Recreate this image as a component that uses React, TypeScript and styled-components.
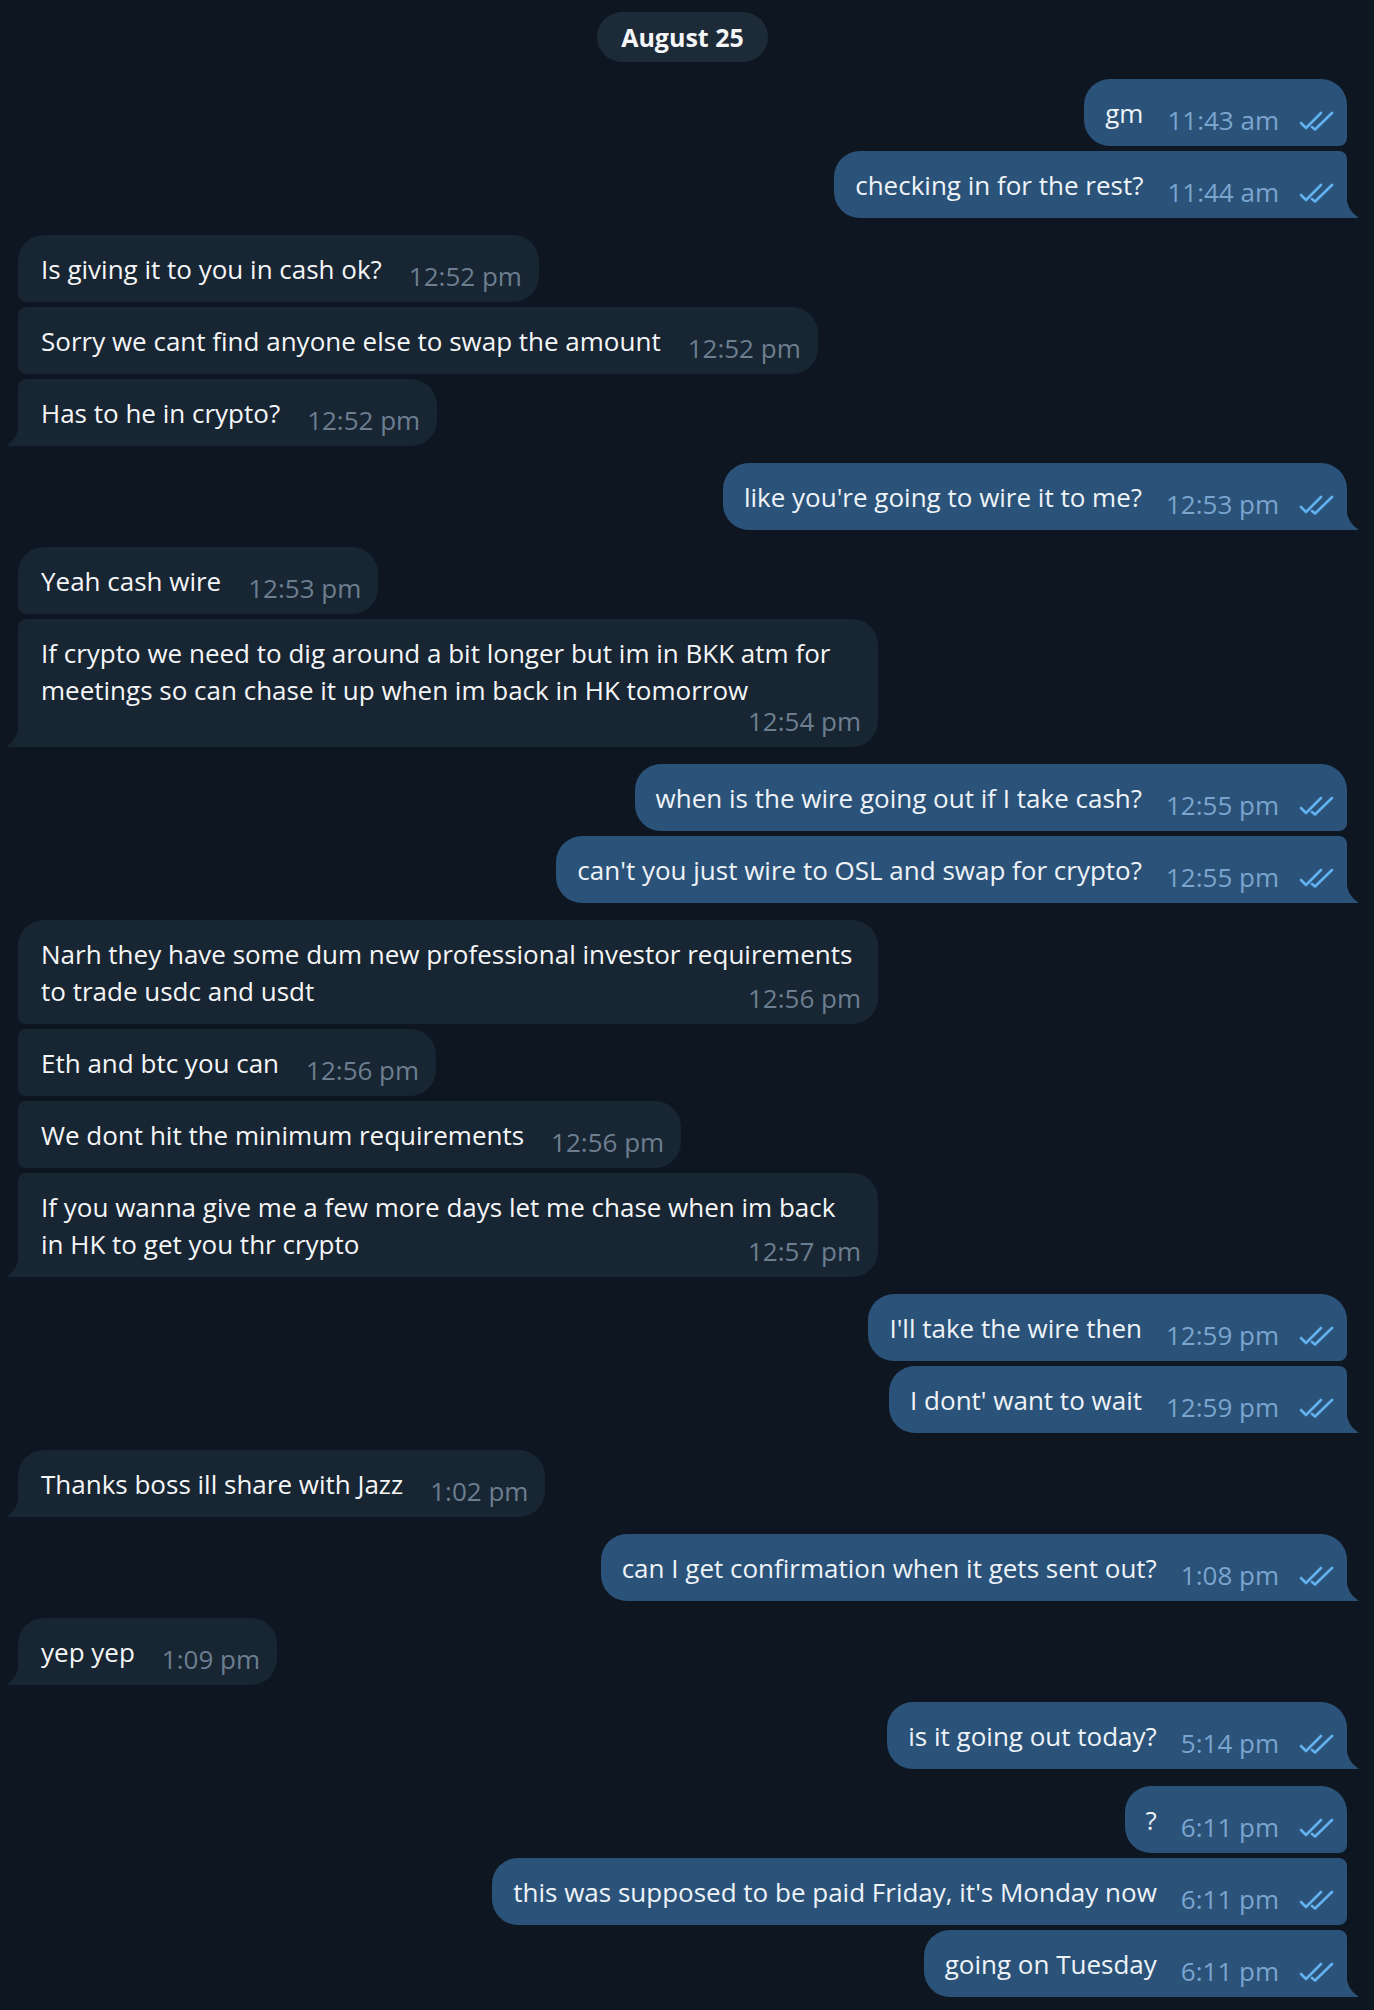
import React from "react";
import styled, { createGlobalStyle, css } from "styled-components";

const GlobalStyle = createGlobalStyle`
  html, body {
    margin: 0;
    padding: 0;
    background: #0e1621;
  }
  body {
    font-family: "Open Sans", "Noto Sans", "Liberation Sans", sans-serif;
    -webkit-font-smoothing: antialiased;
  }
`;

type Msg = { text: string; time: string; below?: boolean };
type Group = { out: boolean; items: Msg[] };

const groups: Group[] = [
  {
    out: true,
    items: [
      { text: "gm", time: "11:43 am" },
      { text: "checking in for the rest?", time: "11:44 am" },
    ],
  },
  {
    out: false,
    items: [
      { text: "Is giving it to you in cash ok?", time: "12:52 pm" },
      { text: "Sorry we cant find anyone else to swap the amount", time: "12:52 pm" },
      { text: "Has to he in crypto?", time: "12:52 pm" },
    ],
  },
  { out: true, items: [{ text: "like you're going to wire it to me?", time: "12:53 pm" }] },
  {
    out: false,
    items: [
      { text: "Yeah cash wire", time: "12:53 pm" },
      {
        text: "If crypto we need to dig around a bit longer but im in BKK atm for meetings so can chase it up when im back in HK tomorrow",
        time: "12:54 pm",
        below: true,
      },
    ],
  },
  {
    out: true,
    items: [
      { text: "when is the wire going out if I take cash?", time: "12:55 pm" },
      { text: "can't you just wire to OSL and swap for crypto?", time: "12:55 pm" },
    ],
  },
  {
    out: false,
    items: [
      {
        text: "Narh they have some dum new professional investor requirements to trade usdc and usdt",
        time: "12:56 pm",
      },
      { text: "Eth and btc you can", time: "12:56 pm" },
      { text: "We dont hit the minimum requirements", time: "12:56 pm" },
      {
        text: "If you wanna give me a few more days let me chase when im back in HK to get you thr crypto",
        time: "12:57 pm",
      },
    ],
  },
  {
    out: true,
    items: [
      { text: "I'll take the wire then", time: "12:59 pm" },
      { text: "I dont' want to wait", time: "12:59 pm" },
    ],
  },
  { out: false, items: [{ text: "Thanks boss ill share with Jazz", time: "1:02 pm" }] },
  { out: true, items: [{ text: "can I get confirmation when it gets sent out?", time: "1:08 pm" }] },
  { out: false, items: [{ text: "yep yep", time: "1:09 pm" }] },
  { out: true, items: [{ text: "is it going out today?", time: "5:14 pm" }] },
  {
    out: true,
    items: [
      { text: "?", time: "6:11 pm" },
      { text: "this was supposed to be paid Friday, it's Monday now", time: "6:11 pm" },
      { text: "going on Tuesday", time: "6:11 pm" },
    ],
  },
];

const Page = styled.div`
  display: flex;
  flex-direction: column;
  gap: 17px;
  padding: 12px 27px 16px 18px;
  min-height: 2010px;
  box-sizing: border-box;
  background: #0e1621;
`;

const DateRow = styled.div`
  display: flex;
  justify-content: center;
`;

const DatePill = styled.div`
  height: 50px;
  padding: 0 24px;
  border-radius: 25px;
  background: #1d2a38;
  color: #f4f6f8;
  font-size: 25px;
  font-weight: 700;
  line-height: 50px;
`;

const GroupBox = styled.div<{ $out: boolean }>`
  display: flex;
  flex-direction: column;
  gap: 5px;
  align-items: ${(p) => (p.$out ? "flex-end" : "flex-start")};
`;

const BIG = 26;
const SMALL = 8;

const Bubble = styled.div<{ $out: boolean; $first: boolean; $last: boolean }>`
  position: relative;
  box-sizing: border-box;
  max-width: ${(p) => (p.$out ? 920 : 860)}px;
  padding: 16px ${(p) => (p.$out ? "13px 14px 21px" : "17px 14px 23px")};
  font-size: 26px;
  line-height: 37px;
  color: ${(p) => (p.$out ? "#eef3f8" : "#f5f6f7")};
  background: ${(p) => (p.$out ? "#2b5278" : "#182533")};
  ${(p) =>
    p.$out
      ? css`
          border-radius: ${BIG}px ${p.$first ? BIG : SMALL}px ${p.$last ? 0 : SMALL}px ${BIG}px;
        `
      : css`
          border-radius: ${p.$first ? BIG : SMALL}px ${BIG}px ${BIG}px ${p.$last ? 0 : SMALL}px;
        `}
`;

const Text = styled.span`
  white-space: pre-wrap;
`;

const Meta = styled.span<{ $out: boolean; $below?: boolean }>`
  float: right;
  display: flex;
  align-items: flex-end;
  height: 24px;
  margin-top: ${(p) => (p.$below ? 0 : 13)}px;
  margin-left: ${(p) => (p.$out ? 24 : 27)}px;
  font-size: 26px;
  line-height: 24px;
  white-space: nowrap;
  color: ${(p) => (p.$out ? "#7aa5cf" : "#6c7e8f")};
`;

const Checks = styled.svg`
  width: 35px;
  height: 20px;
  margin-left: 20px;
  margin-bottom: 1px;
  flex: none;
`;

const Tail = styled.svg<{ $out: boolean }>`
  position: absolute;
  bottom: 0;
  width: 13px;
  height: 24px;
  ${(p) => (p.$out ? "right: -12px;" : "left: -12px;")}
`;

const DoubleCheck = () => (
  <Checks viewBox="0 0 35 20" fill="none" stroke="#62b1f0" strokeWidth={2.6} strokeLinecap="round" strokeLinejoin="round">
    <path d="M2 12 L7 17 L22 2" />
    <path d="M13 16 L16 18.5 L33 2" />
  </Checks>
);

const TailShape = ({ out, color }: { out: boolean; color: string }) => (
  <Tail $out={out} viewBox="0 0 13 24">
    {out ? (
      <path d="M0 0 C0.5 10 4 18 12 23 Q13 24 11 24 L0 24 Z" fill={color} />
    ) : (
      <path d="M13 0 C12.5 10 9 18 1 23 Q0 24 2 24 L13 24 Z" fill={color} />
    )}
  </Tail>
);

export default function App() {
  return (
    <>
      <GlobalStyle />
      <Page>
        <DateRow>
          <DatePill>August 25</DatePill>
        </DateRow>
        {groups.map((g, gi) => (
          <GroupBox key={gi} $out={g.out}>
            {g.items.map((m, i) => {
              const first = i === 0;
              const last = i === g.items.length - 1;
              return (
                <Bubble key={i} $out={g.out} $first={first} $last={last}>
                  <Text>{m.text}</Text>
                  <Meta $out={g.out} $below={m.below}>
                    {m.time}
                    {g.out && <DoubleCheck />}
                  </Meta>
                  {last && <TailShape out={g.out} color={g.out ? "#2b5278" : "#182533"} />}
                </Bubble>
              );
            })}
          </GroupBox>
        ))}
      </Page>
    </>
  );
}
